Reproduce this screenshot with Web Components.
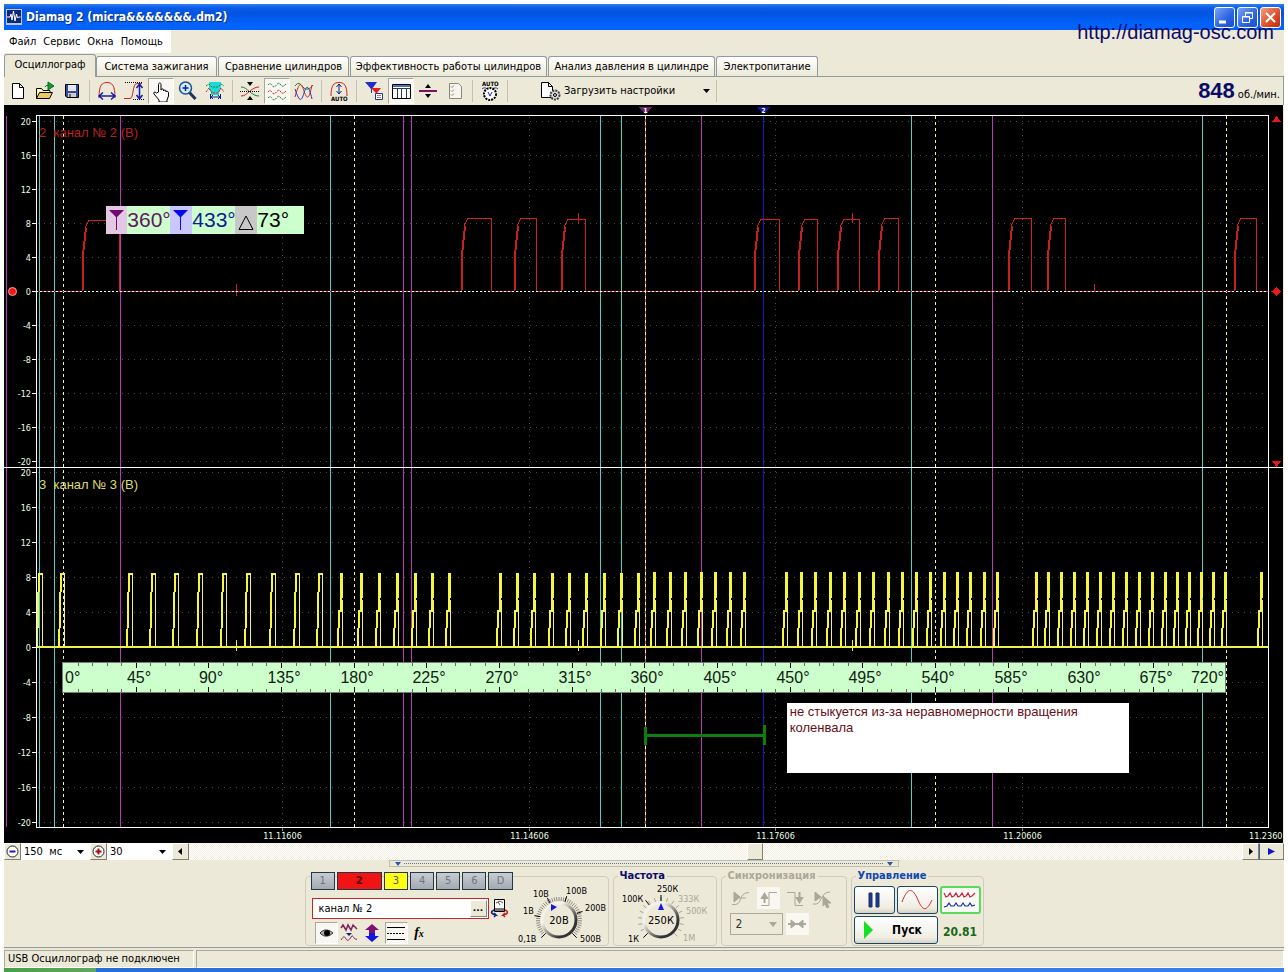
<!DOCTYPE html>
<html lang="ru">
<head>
<meta charset="utf-8">
<title>Diamag 2</title>
<style>
html,body{margin:0;background:#fff}
body{font:11px/14px "DejaVu Sans Condensed","DejaVu Sans",sans-serif;color:#000}
</style>
</head>
<body>
<osc-window></osc-window>
<script>
const define=(name,html,init)=>customElements.define(name,class extends HTMLElement{
  constructor(){super();this.attachShadow({mode:'open'}).innerHTML=html;}
  connectedCallback(){if(init&&!this.ready){this.ready=true;init(this,this.shadowRoot);}}
});

define('title-bar',`<style>
:host{display:flex;align-items:center;height:26px;padding:0 3px 0 2px;box-sizing:border-box;background:linear-gradient(#2f80f4,#0a5ce8 15%,#0353e0 35%,#0262fb 75%,#0262fb);color:#fff}
h1{flex:1;margin:0 0 0 4px;font:bold 12px/18px "DejaVu Sans Condensed",sans-serif;text-shadow:1px 1px #0a2a80}
button{width:21px;height:21px;padding:0;margin-left:2px;border:1px solid #fff;border-radius:3px;background:linear-gradient(135deg,#7aa4f4,#2a62e0 60%,#1c50cc)}
button.x{background:linear-gradient(135deg,#f0a080,#dd4c24 60%,#b83010)}
svg{display:block;margin:auto}
</style>
<svg style="margin:0" width="16" height="16"><rect width="16" height="16" fill="#b8c8e8"/><rect x="1" y="1" width="14" height="13" fill="#102878"/><path d="M1 8h3l1-3 1 6 1.500-9 1.500 10 1.500-7 1 4 1-1h2" fill="none" stroke="#fff"/></svg>
<h1>Diamag 2 (micra&amp;&amp;&amp;&amp;&amp;&amp;&amp;.dm2)</h1>
<button aria-label="Свернуть"><svg width="19" height="19"><path d="M4 14h7" stroke="#fff" stroke-width="3"/></svg></button>
<button aria-label="Восстановить"><svg width="19" height="19" fill="none" stroke="#fff"><path d="M7.500 8V4.500h7v6H12M7 5h8"/><path d="M4.500 8.500h7v6h-7zM4 9h8"/></svg></button>
<button class="x" aria-label="Закрыть"><svg width="19" height="19"><path d="M5 5l9 9M14 5l-9 9" stroke="#fff" stroke-width="2"/></svg></button>`);

define('menu-row',`<style>
:host{display:flex;height:24px;position:relative}
nav{display:flex;align-items:center;gap:7px;height:23px;padding:0 8px 0 5px;background:#fff}
button{border:0;padding:0;background:none;font:11px/14px "DejaVu Sans Condensed",sans-serif}
a{position:absolute;right:10px;top:-10px;font:20px/24px "Liberation Sans",sans-serif;color:#0a0a68;text-decoration:none}
</style>
<nav><button>Файл</button><button>Сервис</button><button>Окна</button><button>Помощь</button></nav>
<a href="#site">http://diamag-osc.com</a>`);

define('tab-row',`<style>
:host{display:flex;height:23px;align-items:flex-end;border-bottom:1px solid #919b9c;box-sizing:border-box}
button{box-sizing:border-box;height:20px;padding:0;margin-right:1px;border:1px solid #919b9c;border-bottom:0;border-radius:3px 3px 0 0;background:linear-gradient(#fff,#ece9d8);font:11px/14px "DejaVu Sans Condensed",sans-serif;white-space:nowrap}
button[aria-selected=true]{height:23px;margin:0 0 -1px;padding-bottom:2px;background:#ece9d8}
</style>
<button role="tab" aria-selected="true" style="width:92px">Осциллограф</button><button role="tab" style="width:121px">Система зажигания</button><button role="tab" style="width:131px">Сравнение цилиндров</button><button role="tab" style="width:197px">Эффективность работы цилиндров</button><button role="tab" style="width:167px">Анализ давления в цилиндре</button><button role="tab" style="width:102px">Электропитание</button>`);

define('tool-button',`<style>
:host{display:block;width:27px}
button{display:block;box-sizing:border-box;width:26px;height:26px;padding:1px;border:1px solid transparent;background:none}
:host([pressed]) button{background:#f8f7f1;border-color:#aca899 #fff #fff #aca899}
</style><button><slot></slot></button>`,(h,r)=>r.querySelector('button').setAttribute('aria-label',h.getAttribute('label')||''));

define('tool-bar',`<style>
:host{display:flex;align-items:center;height:28px;padding-left:1px;border-right:1px solid #919b9c}
i{width:1px;height:22px;margin:0 4px 0 3px;background:#c5c2b2}
svg{display:block;width:22px;height:22px;fill:none;stroke:#000}
.load{display:flex;align-items:center;width:201px;height:24px;padding:0 3px 0 27px;border:0;background:none;font:11px/14px "DejaVu Sans Condensed",sans-serif}
.load span{flex:1;text-align:left;padding-left:3px}
.rpm{margin-left:auto;padding-right:3px;white-space:nowrap}
b{font:bold 22px/24px "Liberation Sans",sans-serif;color:#0a0a68;margin-right:3px}
</style>
<tool-button label="Новый"><svg><path d="M5.500 3.500h7l4 4v11h-11zM12.500 3.500v4h4" fill="#fff"/></svg></tool-button>
<tool-button label="Открыть"><svg><path d="M2.500 18.500v-10h5l1.500 2h7v3" fill="#ffffb0"/><path d="M2.500 18.500l3-6h13l-3 6z" fill="#f0c860"/><path d="M11 7c1-2 3-2 4-1" stroke="#0a6a10"/><path d="M14 2l6 4-6 4z" fill="#12a018" stroke="#064"/></svg></tool-button>
<tool-button label="Сохранить"><svg><path d="M4.500 4.500h13v13H6l-1.500-1.500z" fill="#3a4c98"/><path d="M7 5h8v6H7z" fill="#e6e6ee" stroke="none"/><path d="M7 13h8v4H7z" fill="#ccc" stroke="none"/><path d="M9 14v3"/></svg></tool-button>
<i></i>
<tool-button label="Ширина"><svg><path d="M3 18C3 5 6 2.500 11 2.500S19 5 19 18" stroke="#d02020"/><path d="M3 16h16M7 12.500L3 16l4 3.500M15 12.500l4 3.500-4 3.500" stroke="#1020a8" stroke-width="1.500"/></svg></tool-button>
<tool-button label="Высота"><svg><path d="M1 18.500h6c4 0 2-15 7-15h5" stroke="#d02020"/><path d="M2 2.500h18M10 19.500h11" stroke-dasharray="1 1"/><path d="M16.500 5v13M13.500 8l3-4 3 4M13.500 15l3 4 3-4" stroke="#1020a8" stroke-width="1.500"/></svg></tool-button>
<tool-button label="Рука" pressed><svg><path d="M8.500 12V4.500c0-2 2.500-2 2.500 0V10c0-1.500 2.500-1.500 2.500 0v1c0-1.500 2.500-1 2.500 0v1c0-1.500 2.500-1 2.500 1v3l-1.500 4v2H9v-2l-5-6c-1-2 1-2.500 2.500-1z" fill="#fff"/></svg></tool-button>
<tool-button label="Лупа"><svg><path d="M12 12l6.500 7" stroke="#243060" stroke-width="3"/><circle cx="8.500" cy="8" r="6" fill="#d0ecff" stroke="#205090" stroke-width="1.500"/><path d="M5.500 8h6M8.500 5v6" stroke="#102090" stroke-width="1.500"/></svg></tool-button>
<tool-button label="Фильтр"><svg><path d="M5 2h12v7l-2 3v3H7v-3L5 9z" fill="#20d8d8" stroke="none"/><path d="M2 6l3-2 3 3h6l3-3 3 2" stroke="#108030" stroke-dasharray="2 1"/><path d="M2 12l3-4 3 5h6l3-5 3 4" stroke="#d02020" stroke-dasharray="2 1"/><path d="M6.500 14v5M16.500 14v5M7 17h9M9 15l-2 2 2 2M14 15l2 2-2 2" stroke="#102090"/></svg></tool-button>
<i></i>
<tool-button label="Сжать"><svg><path d="M2 7c4 0 5 2 9 5s6 4 9 4" stroke="#108030"/><path d="M2 16c4 0 5-2 9-5s6-4 9-4" stroke="#c02020"/><path d="M1 11.500h20" stroke-dasharray="1 1"/><path d="M8 2h6l-3 4zM8 20h6l-3-4z" fill="#000" stroke="none"/></svg></tool-button>
<tool-button label="Разнести" pressed><svg stroke-dasharray="2 1"><path d="M2 5c3-4 4 2 6 2s4-6 6-3 3 3 6 0" stroke="#108030"/><path d="M2 12c3-4 4 2 6 2s4-6 6-3 3 3 6 0" stroke="#d02020"/><path d="M2 18c3-4 4 2 6 2s4-6 6-3 3 3 6 0" stroke="#108030"/></svg></tool-button>
<tool-button label="Наложить"><svg><path d="M2 6c3-4 5-3 8 1s7 2 10-2" stroke="#108030"/><path d="M2 17C6 2 8 2 11 11s5 9 8-6" stroke="#d02020"/><path d="M2 9c4 12 6 14 9 4s5-6 8 6" stroke="#3030b0"/></svg></tool-button>
<i></i>
<tool-button label="Авто"><svg><path d="M3 16C3 5 6 2.500 11 2.500S19 5 19 16" stroke="#d02020"/><path d="M11 4v10M8.500 7L11 4l2.500 3M8.500 11l2.500 3 2.500-3" stroke="#102080"/><text x="3" y="21" font-size="6" font-weight="bold" font-family="DejaVu Sans Condensed" fill="#000" stroke="none">AUTO</text></svg></tool-button>
<i></i>
<tool-button label="Маркеры"><svg><path d="M2 2h12L9 9v4H8V9z" fill="#2030c0" stroke="none"/><path d="M8 8h10l-4 5v5h-1v-5z" fill="#e02020" stroke="none"/><path d="M12.500 13.500h7v6h-7z" fill="#fff" stroke="#303080"/><path d="M14 15.500h4M14 17.500h4" stroke="#888"/></svg></tool-button>
<tool-button label="Таблица" pressed><svg><path d="M2.500 4.500h18v14h-18z" fill="#fff"/><path d="M3 5h17v2H3z" fill="#5070c0" stroke="none"/><path d="M2.500 8.500h18M7.500 8v10M11.500 8v10M16.500 8v10" stroke="#303848"/></svg></tool-button>
<tool-button label="Разделить"><svg><path d="M2 11h18" stroke="#80105c" stroke-width="2"/><path d="M8 8h6l-3-4zM8 14h6l-3 4z" fill="#000" stroke="none"/></svg></tool-button>
<tool-button label="Список"><svg style="stroke:#8a887c"><path d="M5.500 3.500h9l3 3v12h-12z" fill="#f6f5ee"/><path d="M7 6.500l1 1 2-2M7 10.500l1 1 2-2M7 14.500l1 1 2-2"/></svg></tool-button>
<i></i>
<tool-button label="Автоизмерение"><svg><text x="3" y="6" font-size="6" font-weight="bold" font-family="DejaVu Sans Condensed" fill="#000" stroke="none">AUTO</text><path d="M3 9c2-2 4-1 5 0M19 9c-2-2-4-1-5 0" stroke="#2030b0"/><circle cx="11" cy="14" r="6" fill="#fff" stroke-dasharray="2 1" stroke-width="2"/><path d="M9 12l2 4 2-4" stroke="#2030b0"/></svg></tool-button>
<i></i>
<button class="load"><svg><path d="M2.500 2.500h7l4 4v11h-11zM9.500 2.500v4h4" fill="#fff"/><circle cx="16" cy="15" r="4.500" fill="#ddd" stroke="#444" stroke-width="2" stroke-dasharray="2 1"/><circle cx="16" cy="15" r="1.500"/></svg><span>Загрузить настройки</span><svg style="width:7px;height:4px"><path d="M0 0h7L3.500 4z" fill="#000" stroke="none"/></svg></button>
<i></i>
<div class="rpm"><b>848</b>об./мин.</div>`);

define('wave-chart',`<style>
:host{display:block;position:relative;background:#000;border-right:1px solid #ece9d8}
svg.plot{display:block;width:100%;height:auto;shape-rendering:crispEdges}
text{font:9px "DejaVu Sans Condensed",sans-serif;fill:#e8ffe8}
.ch{font:13px "Liberation Sans",sans-serif}
.deg{font:16px "Liberation Sans",sans-serif;fill:#102010}
</style><svg class="plot" viewBox="4 105 1279 738" fill="none"></svg><slot></slot>`,(h,r)=>{
  let s='';
  const line=(x1,y1,x2,y2,c,extra='')=>{s+=`<path d="M${x1} ${y1}L${x2} ${y2}" stroke="${c}" ${extra}/>`;};
  const text=(x,y,t,extra='')=>{s+=`<text x="${x}" y="${y}" ${extra}>${t}</text>`;};
  const scales=[{zero:291,step:34},{zero:647,step:35}];
  for(const {zero,step} of scales)for(let k=-5;k<=5;k++){
    const y=zero-k*step+.5;
    line(38,y,1268,y,'#484848','stroke-dasharray="1 5"');
    line(32,y,36,y,'#fff');
    text(31,y+3,k*4,'text-anchor="end"');
  }
  ['11.11606','11.14606','11.17606','11.20606'].forEach((t,i)=>{
    const x=Math.round(282+i*246.5)+.5;
    line(x,117,x,827,'#505050','stroke-dasharray="1 5"');
    line(x,827,x,831,'#888');
    text(x,839,t,'text-anchor="middle"');
  });
  text(1249,839,'11.2360');
  for(const x of [39,54,330,600,621,911,1202])line(x+.5,116,x+.5,827,'#50d0c4');
  for(const x of [6,120,403,411,701,992])line(x+.5,116,x+.5,827,'#b83cb8');
  for(const x of [63,354,645,935,1226])line(x+.5,116,x+.5,827,'#f4f4a0','stroke-dasharray="3 3"');
  line(645.5,116,645.5,827,'#c06040','stroke-dasharray="3 3" stroke-dashoffset="3"');
  line(763.5,108,763.5,827,'#1818c0');
  /* channel 2: injector pulses as [rise, fall, top] */
  const pulses=[[82,119,220],[461,491,218],[514,536,218],[561,585,219],[754,779,219],[798,817,219],[837,859,219],[878,898,218],[1008,1031,218],[1047,1065,218],[1234,1256,218]];
  let d='M36 291.5',lift='';
  for(const [a,b,top] of pulses){
    d+=`H${a}L${a+2} 250L${a+4} ${top+6}L${a+7} ${top+.5}H${b}V291.500`;
    lift+=`M${a+.5} 291L${a+1.5} 250L${a+4} ${top+8}`;
  }
  s+=`<path d="${d}H1268" stroke="#d02020"/><path d="${lift}" stroke="#c82020" stroke-width="2"/>`;
  for(const [x,a,b] of [[236,284,296],[578,213,223],[852,213,223],[1094,284,291]])line(x+.5,a,x+.5,b,'#d02020');
  line(36,291.5,1268,291.5,'#fff','stroke-dasharray="2 2"');
  /* channel 3: crank teeth by centre */
  const teeth=[39,61,129,152,175,199,223,247,272,296,319,340,360,378,396,414,431,448,499,516,533,551,568,585,603,620,637,653,669,684,700,714,729,743,785,800,814,829,843,858,872,887,901,915,929,943,956,969,983,996,1035,1047,1060,1073,1086,1099,1112,1125,1138,1151,1164,1176,1188,1200,1212,1224,1260];
  d='';let body='';
  for(const x of teeth){
    if(x<330){
      body+=`M${x-2} 647L${x-1} 611L${x} 574H${x+3}`;
      d+=`M${x+3.5} 573V647`;
    }else{
      const t=x<640?573:572;
      body+=`M${x-2} 647L${x-1} 610M${x+.5} 612V${t}M${x+1.5} 598V${t}`;
      d+=`M${x+2.5} 600V647`;
    }
  }
  s+=`<path d="${d}" stroke="#f4f080"/><path d="${body}" stroke="#f6f63c" stroke-width="2"/>`;
  line(36,647,1268,647,'#f0f050','stroke-width="2"');
  for(const x of [236,578,852])line(x+.5,640,x+.5,651,'#f0f040');
  s+='<path d="M36 828V115.500H1268.500V827.500H36" stroke="#fff"/>';
  line(4,467.5,1283,467.5,'#fff');
  text(39,137,'2&#160; канал № 2 (В)','class="ch" style="fill:#b82020"');
  text(39,489,'3&#160; канал № 3 (В)','class="ch" style="fill:#dcdc70"');
  s+='<path d="M62.500 662.500H1225.500V692.500H62.500z" fill="#ccffcc" stroke="#708070"/>';
  for(let i=1;i<80;i++){const x=Math.round(63+i*14.535)+.5,m=i%5===0;
    line(x,663,x,m?668:666,m?'#000':'#607060');line(x,692,x,m?687:689,m?'#000':'#607060');}
  for(let i=0;i<=16;i++){
    const anchor=i===0?'start':i===16?'end':'middle',x=i===0?65:i===16?1224:Math.round(66+i*72.68);
    text(x,683,i*45+'°',`class="deg" text-anchor="${anchor}"`);}
  s+='<path d="M645.500 735.500H764" stroke="#0c800c" stroke-width="3"/><path d="M645.500 727v18M764.500 725v20" stroke="#0c800c" stroke-width="3"/>';
  s+='<path d="M638 107h15l-7.500 7z" fill="#702070"/><path d="M756 107h15l-7.500 7z" fill="#1414a8"/>';
  text(645.5,113,'1','text-anchor="middle" style="font-size:7px;font-weight:bold"');
  text(763.5,113,'2','text-anchor="middle" style="font-size:7px;font-weight:bold"');
  s+='<circle cx="12.500" cy="291.500" r="4" fill="#f01818" stroke="#f8a0a0" shape-rendering="auto"/><path d="M1276.500 287l5 4.500-5 4.500-5-4.500zM1272 122h9l-4.500-6zM1272 461h9l-4.500 6z" fill="#e81818"/>';
  r.querySelector('svg').innerHTML=s;
});

define('cursor-readout',`<style>
:host{position:absolute;left:8%;top:101px;display:grid;grid-template-columns:21px 43px 22px 43px 22px 47px;height:28px;background:#ccffcc;font:21px/28px "Liberation Sans",sans-serif}
svg{display:block;width:21px;height:28px}
</style>
<svg style="background:#e2c8e2"><path d="M3 4h15l-7 7v13h-1V11z" fill="#700870"/></svg><span style="color:#601860">360°</span>
<svg style="background:#c8c8ff;width:22px"><path d="M3 4h15l-7 7v13h-1V11z" fill="#0808f0"/></svg><span style="color:#0c1c90">433°</span>
<svg style="background:#c8c8c8;width:22px"><path d="M11 10L4 23.500h14z" fill="none" stroke="#000"/></svg><span>73°</span>`);

define('chart-note',`<style>
:host{position:absolute;left:61.2%;top:598px;box-sizing:border-box;width:342px;height:70px;padding:1px 3px;background:#fff;color:#641018;font:13px/16px "Liberation Sans",sans-serif}
</style><slot></slot>`);

define('time-bar',`<style>
:host{display:flex;height:17px;background:#ece9d8}
button{box-sizing:border-box;width:17px;padding:0;border:1px solid;border-color:#fff #808070 #808070 #fff;background:#ece9d8;flex:none}
svg{display:block;margin:auto}
label{position:relative;display:block;background:#fff}
select{appearance:none;width:100%;height:17px;border:0;padding:0 3px;background:#fff;font:11px/15px "DejaVu Sans Condensed",sans-serif}
label svg{position:absolute;right:6px;top:7px;pointer-events:none}
.track{flex:1;display:flex;background:repeating-conic-gradient(#fffefa 0 25%,#f1efe4 0 50%) 0 0/2px 2px}
.track button{margin-left:53%;width:16px}
</style>
<button aria-label="Меньше"><svg width="15" height="15" fill="none"><circle cx="7.500" cy="7.500" r="5.500" fill="#fff" stroke="#222"/><path d="M4.500 7.500h6" stroke="#2020a0" stroke-width="2"/></svg></button>
<label style="width:69px"><select aria-label="Развёртка"><option>150&#160; мс</option></select><svg width="7" height="4"><path d="M0 0h7L3.500 4z"/></svg></label>
<button aria-label="Больше"><svg width="15" height="15" fill="none"><circle cx="7.500" cy="7.500" r="5.500" fill="#fff" stroke="#222"/><path d="M4.500 7.500h6M7.500 4.500v6" stroke="#a01010" stroke-width="2"/></svg></button>
<label style="width:65px"><select aria-label="Масштаб"><option>30</option></select><svg width="7" height="4"><path d="M0 0h7L3.500 4z"/></svg></label>
<button aria-label="Влево"><svg width="15" height="15"><path d="M9 4v7L5 7.500z"/></svg></button>
<div class="track"><button aria-label="Бегунок"></button></div>
<button aria-label="Вправо"><svg width="15" height="15"><path d="M6 4v7l4-3.500z"/></svg></button>
<button style="width:25px;border-left-color:#4060a0" aria-label="В конец"><svg width="15" height="15"><path d="M4 4v7l7-3.500z" fill="#1010d0"/></svg></button>`);

define('split-handle',`<style>
:host{display:flex;align-items:center;justify-content:space-between;box-sizing:border-box;width:510px;height:7px;margin:0 auto;padding:0 5px;border:1px solid #c0bda8}
i{flex:1;height:1px;margin:0 3px;background:repeating-linear-gradient(90deg,#5878a0 0 1px,transparent 1px 2px)}
</style><svg width="6" height="4"><path d="M0 0h6L3 4z" fill="#2858a8"/></svg><i></i><svg width="6" height="4"><path d="M0 0h6L3 4z" fill="#2858a8"/></svg>`);

define('control-group',`<style>
:host{display:block;box-sizing:border-box;height:76px}
fieldset{position:relative;box-sizing:border-box;height:70px;margin:7px 0 0;padding:0;border:1px solid #d0cdbe;border-radius:4px;min-width:0}
h2{position:absolute;left:4px;top:-8px;margin:0;padding:0 2px;background:#ece9d8;color:var(--tone,#0a0a68);font:bold 11px/14px "DejaVu Sans Condensed",sans-serif}
h2:empty{display:none}
slot{display:block}
</style><fieldset><h2></h2><slot></slot></fieldset>`,(h,r)=>{r.querySelector('h2').textContent=h.getAttribute('caption')||'';});

define('range-dial',`<style>
:host{display:block}svg{display:block}
text{font:9px "DejaVu Sans Condensed",sans-serif;fill:#000}
text.off{fill:#aaa796}text.v{font-size:11px}
</style><svg fill="none"></svg>`,(h,r)=>{
  const svg=r.querySelector('svg'),freq=h.hasAttribute('frequency');
  const W=freq?102:94;svg.setAttribute('width',W);svg.setAttribute('height',66);
  const cx=freq?47:45,cy=43;let s='';
  const n=freq?16:44;
  const tick=(deg,len,color)=>{const a=deg*Math.PI/180,c=Math.cos(a),q=Math.sin(a);
    s+=`<path d="M${(cx+19*c).toFixed(1)} ${(cy+19*q).toFixed(1)}L${(cx+len*c).toFixed(1)} ${(cy+len*q).toFixed(1)}" stroke="${color}"/>`;};
  for(let i=0;i<=n;i++)tick(-225+i*270/n,23,freq?'#a8a594':'#8c8a7c');
  for(const deg of freq?[-225,-128,-90]:[-225,-170,-118,-72,-20,45])tick(deg,25,'#000');
  s+=`<defs><linearGradient id="k" x2="1" y2="1"><stop offset=".3" stop-color="#f4f2e8"/><stop offset=".75" stop-color="#333"/></linearGradient></defs><circle cx="${cx}" cy="${cy}" r="17" stroke="url(#k)" stroke-width="3" fill="#ece9d8"/>`;
  s+=freq?`<path d="M44 33h6l-3-7z" fill="#1818e0"/>`:`<path d="M37 27l6 3-6 4z" fill="#1818e0"/>`;
  const L=freq?[[43,15,'250К'],[8,25,'100К'],[64,25,'333К',1],[72,37,'500К',1],[14,65,'1К'],[69,64,'1М',1]]:[[19,20,'10В'],[52,17,'100В'],[71,34,'200В'],[9,37,'1В'],[4,65,'0,1В'],[66,65,'500В']];
  for(const [x,y,t,off] of L)s+=`<text x="${x}" y="${y}" ${off?'class="off"':''}>${t}</text>`;
  s+=`<text class="v" x="${cx}" y="47" text-anchor="middle">${freq?'250К':'20В'}</text>`;
  svg.innerHTML=s;
});

define('channel-panel',`<style>
:host{display:flex;gap:1px}
.left{width:207px;flex:none}
.ch{display:flex;gap:2px;margin:-5px 0 0 5px}
.ch button{box-sizing:border-box;width:25px;height:18px;padding:0;border:1px solid #203848;background:linear-gradient(#c8ccd2,#a4a9b2);color:#70757e;font:11px/14px "DejaVu Sans Condensed",sans-serif}
.ch .r{width:47px;background:#f01414;color:#500;font-weight:bold}.ch .y{background:#ffff14;color:#554}
.name{display:flex;align-items:center;margin:7px 0 0 6px}
.box{box-sizing:border-box;display:flex;width:177px;height:21px;border:1px solid #c02828;background:#fff;padding:1px}
input{flex:1;min-width:0;border:0;padding:0 5px;font:11px/15px "DejaVu Sans Condensed",sans-serif}
.box button{width:17px;padding:0;border:1px solid;border-color:#fff #888 #888 #fff;background:#ece9d8;font:bold 9px/8px "DejaVu Sans",sans-serif}
.icons{display:flex;margin:3px 0 0 9px}
.icons button,.name>button{box-sizing:border-box;width:23px;height:22px;padding:0;border:1px solid transparent;background:none}
.icons .on{background:#f8f7f1;border-color:#aca899 #fff #fff #aca899}
svg{display:block;margin:auto}
</style>
<div class="left"><div class="ch"><button>1</button><button class="r">2</button><button class="y">3</button><button>4</button><button>5</button><button>6</button><button>D</button></div>
<div class="name"><div class="box"><input aria-label="Имя канала" value="канал № 2"><button aria-label="Выбрать">...</button></div><button aria-label="Поменять прибор"><svg width="20" height="20" fill="none"><path d="M4.500 1.500h10v12h-10z" fill="#fff" stroke="#000"/><path d="M5 10h9v3H5z" fill="#777"/><path d="M6 5l4-2 3 2M10 7l-2-3" stroke="#555"/><path d="M4 12c-4 2-3 4 2 5l-2-2m2 2l-2 2" stroke="#102080" stroke-width="1.500"/><path d="M15 12c4 2 3 4-2 5l2-2m-2 2l2 2" stroke="#c02020" stroke-width="1.500"/></svg></button></div>
<div class="icons"><button class="on" aria-label="Видимость"><svg width="18" height="18" fill="none"><path d="M3 9c3-4 9-4 13 0-4 4-9 4-12 1z" fill="#aaa" stroke="#333"/><circle cx="10" cy="9" r="3" fill="#000"/></svg></button>
<button aria-label="Сглаживание"><svg width="18" height="20" fill="none" stroke="#802060"><path d="M1 5l2-3 3 5 2-5 3 5 2-5 4 4" stroke-width="1.500"/><path d="M1 17c3-5 4-3 5-1s3 2 5-2 3 4 6 2"/><path d="M6 10h6l-3 3z" fill="#102080" stroke="none"/></svg></button>
<button aria-label="Сдвиг"><svg width="18" height="20"><path d="M9 1l7 6h-4v3H6V7H2z" fill="#801070"/><path d="M9 19l7-6h-4v-3H6v3H2z" fill="#1414e0"/></svg></button>
<button class="on" style="margin-left:1px" aria-label="Линии"><svg width="20" height="20" stroke="#000"><path d="M1 4.500h18M1 16.500h18"/><path d="M1 10.500h18" stroke-dasharray="2 1"/></svg></button>
<button aria-label="Функция" style="font:italic bold 14px/16px 'Liberation Serif',serif">f<span style="font-size:10px">x</span></button></div></div>
<range-dial></range-dial>`);

define('sync-panel',`<style>
:host{display:grid;grid-template-columns:27px 27px 27px 27px;margin:10px 0 0 8px;row-gap:4px}
button{box-sizing:border-box;width:23px;height:22px;padding:0;border:0;background:none}
.on{background:#f8f7f1}
svg{display:block;margin:auto;width:20px;height:20px;fill:none;stroke:#aca899}
label{grid-column:1/3;position:relative}
select{appearance:none;box-sizing:border-box;width:53px;height:22px;padding:0 5px;border:1px solid #aca899;background:#ece9d8;color:#333;opacity:1;font:12px/16px "DejaVu Sans Condensed",sans-serif}
label svg{position:absolute;left:39px;top:9px;width:8px;height:5px}
</style>
<button disabled aria-label="Уровень"><svg><path d="M1 16.500c12 2 5-12 17-12M8 10h7"/><path d="M3 4l6 5-6 5z" fill="#aca899"/></svg></button>
<button disabled class="on" aria-label="Фронт"><svg><path d="M3 17.500h8v-13h8"/><path d="M6.500 15V7M4 10l2.500-4L9 10z" stroke-width="2"/></svg></button>
<button disabled aria-label="Спад"><svg><path d="M2 4.500h8v13h8"/><path d="M14.500 4v8M12 10l2.500 4 2.500-4z" stroke-width="2"/></svg></button>
<button disabled aria-label="Ручной"><svg><path d="M1 16c10 2 6-12 17-12"/><path d="M3 4l6 5-6 4zM11 8l8 7-4 0 2 4-2 1-2-4-2 2z" fill="#aca899"/></svg></button>
<label><select disabled aria-label="Канал синхронизации"><option>2</option></select><svg><path d="M0 0h8L4 5z" fill="#aca899" stroke="none"/></svg></label>
<button disabled class="on" aria-label="Удержание" style="margin-left:2px"><svg><path d="M1 10h18" stroke-width="2"/><path d="M4 6l5 4-5 4zM16 6l-5 4 5 4z" fill="#aca899"/></svg></button>`);

define('run-panel',`<style>
:host{display:grid;grid-template-columns:41px 41px 41px;gap:2px;margin:9px 0 0 2px}
button{box-sizing:border-box;height:28px;padding:0;border:1px solid #1c4468;border-radius:3px;background:linear-gradient(#fff,#efede2 80%,#d8d2c0);font:bold 12px/14px "DejaVu Sans Condensed",sans-serif}
svg{display:block;margin:auto}
.go{grid-column:1/3;display:flex;align-items:center;justify-content:center;gap:18px;padding-right:6px}
.go svg{margin:0}
output{align-self:center;text-align:center;padding-top:4px;font:bold 12px/16px "DejaVu Sans Condensed",sans-serif;color:#186818}
</style>
<button aria-label="Пауза"><svg width="14" height="16"><path d="M2 1h3v14H2zM9 1h3v14H9z" fill="#1838a0" stroke="#203050"/></svg></button>
<button aria-label="Синус"><svg width="34" height="22" fill="none"><path d="M2 13C8-3 13-1 18 11s9 11 14 0" stroke="#d03030"/></svg></button>
<button style="border:2px solid #5cd85c;background:#f8fbf4" aria-label="Сигналы"><svg width="34" height="22" fill="none"><path d="M1 4l2 4 2-1 2-3 2 4 2-1 2-3 2 4 2-1 2-3 2 4 2-1 2-3 2 4 2-1 3-3" stroke="#d02040" stroke-width="1.200"/><path d="M1 18l3-1 2-3 2 3 3 0 2-3 2 3 3 0 2-3 2 3 3 0 2-3 2 3 3-1" stroke="#1828b0" stroke-width="1.200"/></svg></button>
<button class="go"><svg width="11" height="20"><path d="M1 1l9 9-9 9z" fill="#14e024"/></svg>Пуск</button><output>20.81</output>`);

define('control-deck',`<style>
:host{display:flex;justify-content:center;gap:4px;height:81px;border-bottom:1px solid #919b9c;box-sizing:border-box;padding-top:2px}
</style>
<control-group style="width:304px"><channel-panel></channel-panel></control-group>
<control-group style="width:104px" caption="Частота"><range-dial frequency></range-dial></control-group>
<control-group style="width:126px;--tone:#aca899" caption="Синхронизация"><sync-panel></sync-panel></control-group>
<control-group style="width:133px;--tone:#1048b0" caption="Управление"><run-panel></run-panel></control-group>`);

define('status-row',`<style>
:host{display:flex;height:20px;padding-top:2px;box-sizing:border-box;gap:2px}
div{box-sizing:border-box;padding:1px 3px;border:1px solid;border-color:#aca899 #fff #fff #aca899;line-height:14px}
.a{width:190px;white-space:nowrap}.b{flex:1}
</style><div class="a">USB Осциллограф не подключен</div><div class="b"></div>`);

define('osc-window',`<style>
:host{display:block;margin:4px 4px 0;background:#ece9d8}
.task{display:block;height:4px;background:linear-gradient(90deg,#48a048,#60a860 92px,#2a6cd8 92px,#3a80ee)}
</style>
<title-bar></title-bar><menu-row></menu-row><tab-row></tab-row><tool-bar></tool-bar>
<wave-chart><cursor-readout></cursor-readout><chart-note>не стыкуется из-за неравномерности вращения<br>коленвала</chart-note></wave-chart>
<time-bar></time-bar><split-handle></split-handle><control-deck></control-deck><status-row></status-row><div class="task"></div>`);
</script>
</body>
</html>
